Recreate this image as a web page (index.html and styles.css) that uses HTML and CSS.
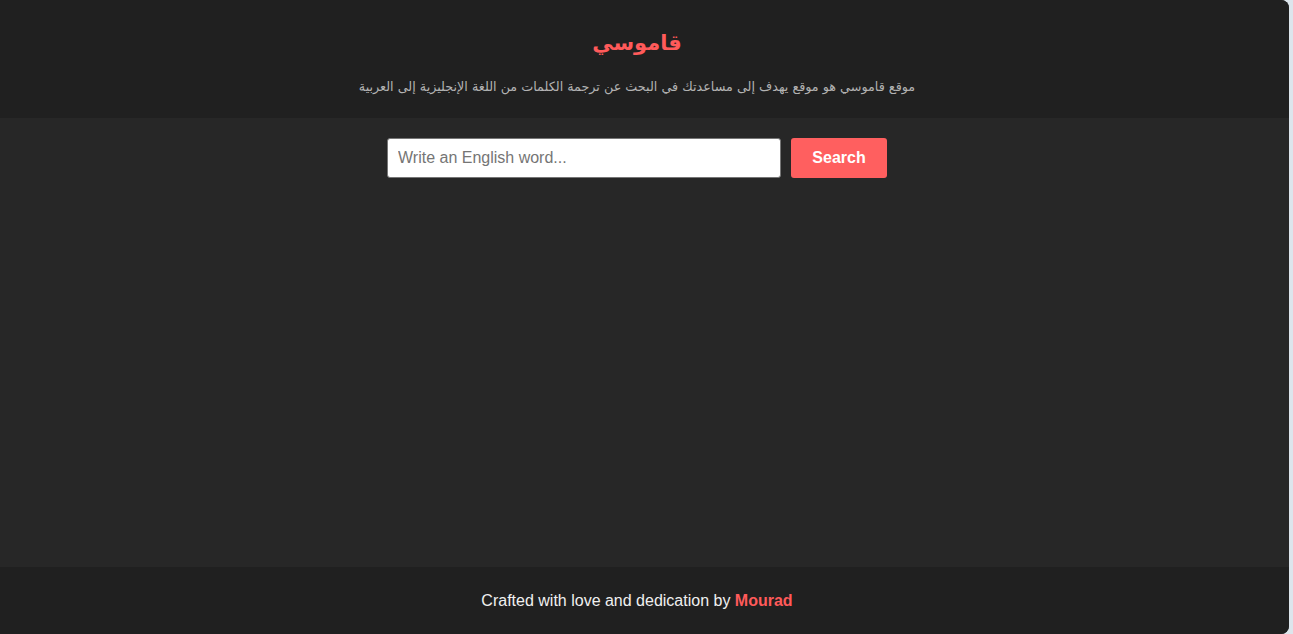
FILE: index.html
```html
<!DOCTYPE html>
<html lang="ar">
<head>
<meta charset="utf-8">
<title>قاموسي</title>
<link rel="stylesheet" href="styles.css">
</head>
<body>
<div class="app">
  <header class="site-header">
    <h1 class="title">قاموسي</h1>
    <p class="subtitle">موقع قاموسي هو موقع يهدف إلى مساعدتك في البحث عن ترجمة الكلمات من اللغة الإنجليزية إلى العربية</p>
  </header>
  <main class="content">
    <form class="search" onsubmit="return false;">
      <input class="search-input" type="text" placeholder="Write an English word..." dir="ltr">
      <button class="search-btn" type="submit">Search</button>
    </form>
  </main>
  <footer class="site-footer">
    <p class="credit" dir="ltr">Crafted with love and dedication by <span class="author">Mourad</span></p>
  </footer>
</div>
</body>
</html>
```

FILE: styles.css
```css
html, body {
  margin: 0;
  padding: 0;
  height: 100%;
}
body {
  background: #dde5ec;
  font-family: "Liberation Sans", Arial, sans-serif;
}
.app {
  width: 1289px;
  height: 634px;
  display: flex;
  flex-direction: column;
  border-radius: 0 8px 8px 0;
  overflow: hidden;
  background: #272727;
}
.site-header {
  background: #202020;
  height: 118px;
  box-sizing: border-box;
  padding: 27px 15px 0 0;
  text-align: center;
}
.title {
  margin: 0;
  font-family: "DejaVu Sans", sans-serif;
  font-size: 21px;
  font-weight: bold;
  line-height: 32px;
  color: #ff5a5a;
}
.subtitle {
  margin: 18px 0 0;
  font-family: "DejaVu Sans", sans-serif;
  font-size: 12.75px;
  line-height: 20px;
  color: #b3b3b3;
}
.content {
  flex: 1;
  padding: 20px 15px 0 0;
}
.search {
  display: flex;
  justify-content: center;
  gap: 10px;
}
.search-input {
  width: 394px;
  height: 40px;
  box-sizing: border-box;
  border: 1px solid #767676;
  border-radius: 3px;
  padding: 0 10px;
  font-family: "Liberation Sans", Arial, sans-serif;
  font-size: 16px;
  color: #333;
  background: #fff;
}
.search-input::placeholder {
  color: #757575;
}
.search-btn {
  width: 96px;
  height: 40px;
  border: none;
  border-radius: 3px;
  background: #ff5f5f;
  color: #fff;
  font-family: "Liberation Sans", Arial, sans-serif;
  font-size: 16px;
  font-weight: bold;
  cursor: pointer;
}
.site-footer {
  background: #202020;
  height: 67px;
  padding-right: 15px;
  display: flex;
  align-items: center;
  justify-content: center;
}
.credit {
  margin: 1px 0 0;
  font-size: 16px;
  color: #f0f0f0;
}
.author {
  color: #ff5a5a;
  font-weight: bold;
}
```
